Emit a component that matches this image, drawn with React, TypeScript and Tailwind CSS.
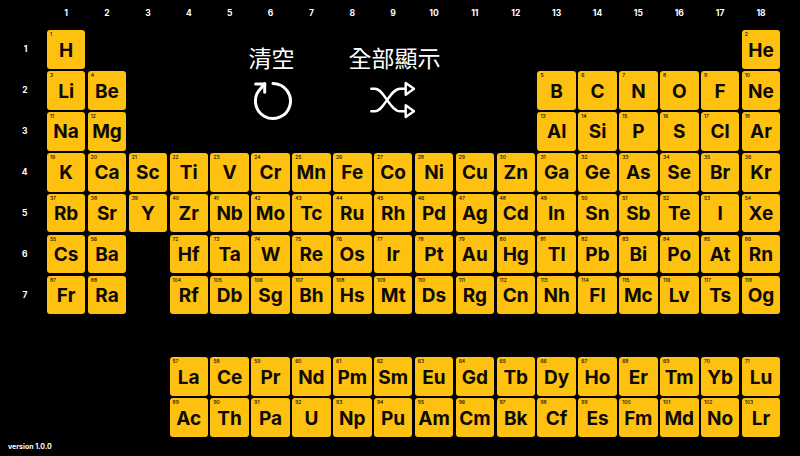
const symbols: [string, number, number, number][] = []

// symbol lists per table row, [row, startColumn, startNumber, symbols]
const blocks: [number, number, number, string][] = [
  [1, 1, 1, 'H'],
  [1, 18, 2, 'He'],
  [2, 1, 3, 'Li Be'],
  [2, 13, 5, 'B C N O F Ne'],
  [3, 1, 11, 'Na Mg'],
  [3, 13, 13, 'Al Si P S Cl Ar'],
  [4, 1, 19, 'K Ca Sc Ti V Cr Mn Fe Co Ni Cu Zn Ga Ge As Se Br Kr'],
  [5, 1, 37, 'Rb Sr Y Zr Nb Mo Tc Ru Rh Pd Ag Cd In Sn Sb Te I Xe'],
  [6, 1, 55, 'Cs Ba'],
  [6, 4, 72, 'Hf Ta W Re Os Ir Pt Au Hg Tl Pb Bi Po At Rn'],
  [7, 1, 87, 'Fr Ra'],
  [7, 4, 104, 'Rf Db Sg Bh Hs Mt Ds Rg Cn Nh Fl Mc Lv Ts Og'],
  [9, 4, 57, 'La Ce Pr Nd Pm Sm Eu Gd Tb Dy Ho Er Tm Yb Lu'],
  [10, 4, 89, 'Ac Th Pa U Np Pu Am Cm Bk Cf Es Fm Md No Lr'],
]

blocks.forEach(([row, col, num, list]) => {
  list.split(' ').forEach((s, i) => symbols.push([s, row, col + i, num + i]))
})

function Cell({ sym, row, col, num }: { sym: string; row: number; col: number; num: number }) {
  return (
    <div
      className="relative flex items-center justify-center rounded-[3px] bg-[#fec10f] pt-[1px] text-[19px] leading-none font-bold text-[#0d0a04]"
      style={{ gridRow: row + 1, gridColumn: col + 1 }}
    >
      <span className="absolute top-[2px] left-[3px] text-[5px] leading-none font-medium">{num}</span>
      {sym}
    </div>
  )
}

function ResetIcon() {
  return (
    <svg width="46" height="46" viewBox="0 0 46 46" fill="none" stroke="white" strokeWidth="3" strokeLinecap="round" strokeLinejoin="round">
      <path d="M23 5.5 A17.5 17.5 0 1 1 10.5 10.7 L14.7 5.7" />
      <path d="M5.6 6 H14.7 V14.3" />
    </svg>
  )
}

function ShuffleIcon() {
  return (
    <svg width="46" height="46" viewBox="0 0 46 46" fill="none" stroke="white" strokeWidth="2.4" strokeLinecap="round" strokeLinejoin="round">
      <path d="M1.3 10.7 H5 C14 10.7 20 33.3 30 33.3 H35.7" />
      <path d="M1.3 33.3 H5 C14 33.3 20 10.7 30 10.7 H35.7" />
      <path d="M35.7 5 L44 10.7 L35.7 16.7 Z" />
      <path d="M35.7 27.3 L44 33.3 L35.7 39 Z" />
    </svg>
  )
}

export default function App() {
  return (
    <div className="relative h-[456px] w-[800px] overflow-hidden bg-black font-['Inter','Noto_Sans_CJK_TC',sans-serif] text-white">
      <div className="grid grid-cols-[44.5px_repeat(18,38.5px)] grid-rows-[28px_repeat(10,38.5px)] gap-[2.38px]">
        {Array.from({ length: 18 }, (_, i) => (
          <div key={i} className="flex items-center justify-center pb-[2px] text-[8.5px] font-bold" style={{ gridRow: 1, gridColumn: i + 2 }}>
            {i + 1}
          </div>
        ))}
        {Array.from({ length: 7 }, (_, i) => (
          <div key={i} className="flex items-center justify-end pr-[17px] text-[8.5px] font-bold" style={{ gridRow: i + 2, gridColumn: 1 }}>
            {i + 1}
          </div>
        ))}
        {symbols.map(([sym, row, col, num]) => (
          <Cell key={sym} sym={sym} row={row} col={col} num={num} />
        ))}
        <div className="col-span-8 col-start-6 row-span-3 row-start-2 flex items-start pt-[15px] pl-[15px]">
          <div className="flex w-[92px] flex-col items-center">
            <span className="text-[23px] leading-[28px] font-normal">清空</span>
            <div className="mt-[5px] ml-[3px]"><ResetIcon /></div>
          </div>
          <div className="ml-[31px] flex w-[92px] flex-col items-center">
            <span className="text-[23px] leading-[28px] font-normal">全部顯示</span>
            <div className="mt-[5px] mr-[3px]"><ShuffleIcon /></div>
          </div>
        </div>
      </div>
      <div className="absolute bottom-[4px] left-[8px] text-[7px] font-bold">version 1.0.0</div>
    </div>
  )
}
